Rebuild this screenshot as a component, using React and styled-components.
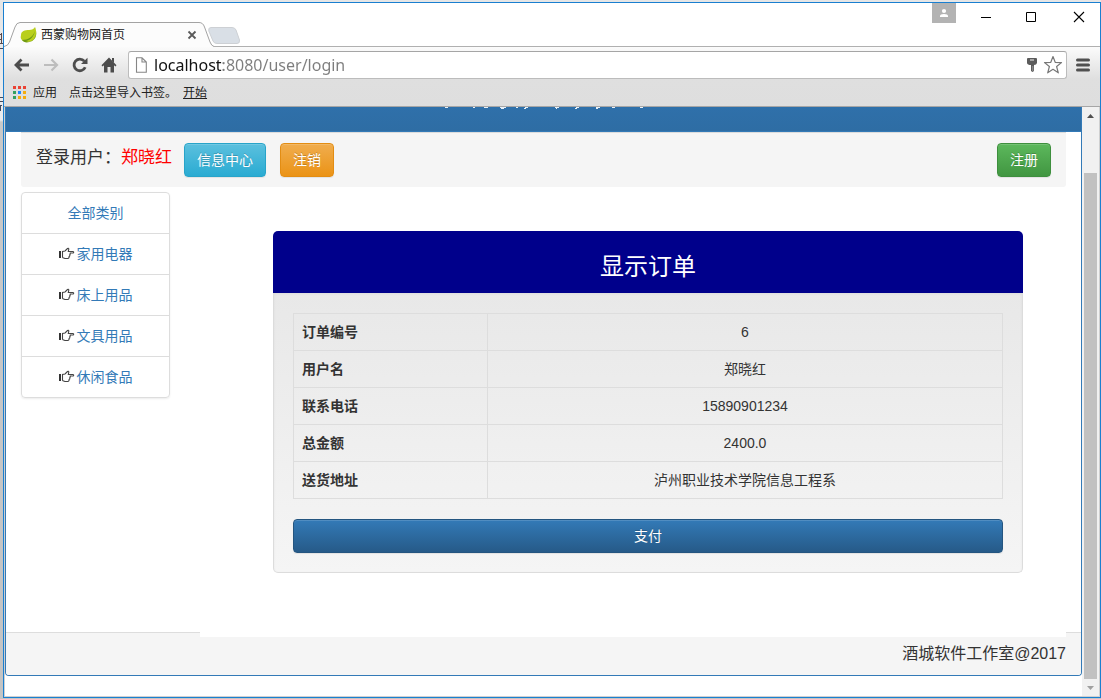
import React from "react";
import styled, { createGlobalStyle, css } from "styled-components";

const Global = createGlobalStyle`
  *, *::before, *::after { box-sizing: border-box; }
  body {
    margin: 0;
    font-family: "Liberation Sans", "Noto Sans CJK SC", sans-serif;
    font-size: 14px;
    line-height: 20px;
    color: #333;
    background: #e9eaeb;
  }
  button, input { font: inherit; }
  button { cursor: pointer; }
`;

const Desktop = styled.div`
  position: relative;
  display: flex;
  min-height: 100vh;
  padding: 2px 0 1px 3px;
  background: linear-gradient(#e6e6e6 0, #ebecee 120px, #c9c9c9 122px, #c4c4c4 100%);
`;

const Behind = styled.svg`
  position: absolute;
  left: 0;
  top: 0;
`;

const Window = styled.div`
  flex: 1;
  min-width: 0;
  display: flex;
  flex-direction: column;
  border: 1px solid #1a7fd0;
  background: #fff;
`;

const TitleBar = styled.header`
  display: flex;
  justify-content: space-between;
  height: 43px;
`;

const Tabs = styled.div`
  display: flex;
  align-items: flex-end;
`;

const Tab = styled.div`
  position: relative;
  z-index: 1;
  display: flex;
  align-items: center;
  gap: 4px;
  width: 210px;
  height: 24px;
  padding: 1px 16px 0;
  font-size: 12px;
  line-height: 16px;
  color: #222;
`;

const TabShape = styled.svg`
  position: absolute;
  left: 0;
  top: 0;
  z-index: -1;
`;

const TabTitle = styled.span`
  flex: 1;
  white-space: nowrap;
`;

const IconButton = styled.button`
  display: flex;
  align-items: center;
  justify-content: center;
  flex: none;
  width: ${(p) => p.$w || 16}px;
  height: ${(p) => p.$h || 16}px;
  padding: 0;
  border: 0;
  background: ${(p) => p.$bg || "transparent"};
`;

const NewTab = styled(IconButton)`
  align-self: flex-end;
  margin: 0 0 2px -6px;
`;

const WindowButtons = styled.div`
  display: flex;
  align-items: flex-start;
`;

const CaptionButtons = styled.div`
  display: flex;
  gap: 8px;
  padding-left: 12px;
`;

const Toolbar = styled.div`
  border-top: 1px solid #b0b0b0;
  border-bottom: 1px solid #a6a6a6;
  background: linear-gradient(#fbfbfb, #dfdfdf 32px, #dedede);
`;

const NavRow = styled.div`
  display: flex;
  align-items: center;
  gap: 6px;
  padding: 4px 7px 0 8px;
`;

const NavButtons = styled.div`
  display: flex;
  gap: 5px;
`;

const Omnibox = styled.div`
  flex: 1;
  display: flex;
  align-items: center;
  height: 28px;
  margin-left: -1px;
  padding: 0 0 0 5px;
  border: 1px solid #bcbcbc;
  border-top-color: #a5a5a5;
  border-radius: 3px;
  background: #fff;
`;

const Url = styled.input`
  flex: 1;
  min-width: 0;
  height: 24px;
  margin-left: 6px;
  padding: 0;
  border: 0;
  outline: 0;
  font-family: "Noto Sans", "Open Sans", sans-serif;
  font-size: 16px;
  line-height: 24px;
  color: #111;
  background: linear-gradient(90deg, #111 69px, #7d7d7d 69px);
  background-clip: text;
  -webkit-background-clip: text;
  -webkit-text-fill-color: transparent;
`;

const Bookmarks = styled.nav`
  display: flex;
  align-items: center;
  gap: 6px;
  height: 27px;
  padding: 0 9px;
  font-size: 12px;
  line-height: 16px;
  color: #222;
`;

const Bookmark = styled.a`
  display: flex;
  align-items: center;
  gap: 7px;
  color: #222;
  text-decoration: ${(p) => (p.$underline ? "underline" : "none")};
`;

const BookmarkHint = styled.span`
  padding-left: 6px;
`;

const Viewport = styled.div`
  flex: 1;
  display: flex;
  border: 1px solid #d0d0d0;
  border-top: 0;
`;

const Page = styled.div`
  flex: 1;
  min-width: 0;
  padding-bottom: 19px;
`;

const SitePanel = styled.div`
  border: 1px solid #337ab7;
  border-top: 0;
  border-radius: 0 0 4px 4px;
  overflow: hidden;
`;

const SiteHeading = styled.div`
  height: 25px;
  background: linear-gradient(#2f70aa, #2e6da4);
  border-bottom: 1px solid #337ab7;
`;

const HeadingEdge = styled.svg`
  display: block;
  margin: 0 auto;
`;

const Content = styled.div`
  padding: 0 15px;
`;

const UserBar = styled.div`
  display: flex;
  align-items: center;
  gap: 14px;
  padding: 10px 15px;
  margin-bottom: 5px;
  border-top: 1px solid #dcdcdc;
  border-radius: 0 0 3px 3px;
  background: #f5f5f5;
`;

const Greeting = styled.div`
  align-self: flex-start;
  margin-right: -2px;
  font-size: 17px;
  line-height: 30px;
  white-space: nowrap;
`;

const UserName = styled.span`
  color: #f00;
`;

const tones = {
  info: css`
    border-color: #28a4c9;
    background: linear-gradient(#5bc0de, #2aabd2);
  `,
  warning: css`
    border-color: #e38d13;
    background: linear-gradient(#f0ad4e, #eb9316);
  `,
  success: css`
    border-color: #3e8f3e;
    background: linear-gradient(#5cb85c, #419641);
  `,
  primary: css`
    border-color: #245580;
    background: linear-gradient(#337ab7, #265a88);
  `,
};

const Button = styled.button`
  display: block;
  height: 34px;
  padding: 0 12px;
  width: ${(p) => (p.$block ? "100%" : "auto")};
  margin-left: ${(p) => (p.$end ? "auto" : "0")};
  border: 1px solid;
  border-radius: 4px;
  color: #fff;
  font-size: 14px;
  line-height: 32px;
  text-shadow: 0 -1px 0 rgba(0, 0, 0, 0.2);
  box-shadow: inset 0 1px 0 rgba(255, 255, 255, 0.15), 0 1px 1px rgba(0, 0, 0, 0.075);
  ${(p) => tones[p.$tone]}
`;

const Columns = styled.div`
  display: flex;
  align-items: flex-start;
  gap: 30px;
`;

const Categories = styled.nav`
  flex: none;
  width: 149px;
  border: 1px solid #ddd;
  border-radius: 4px;
  box-shadow: 0 1px 2px rgba(0, 0, 0, 0.075);
`;

const Category = styled.a`
  display: flex;
  align-items: center;
  justify-content: center;
  gap: 2px;
  height: 41px;
  color: #337ab7;
  text-decoration: none;
  border-bottom: 1px solid #ddd;
  &:last-child {
    height: 40px;
    border-bottom: 0;
  }
`;

const Main = styled.main`
  position: relative;
  flex: 1;
  min-width: 0;
  margin-bottom: -5px;
  padding: 39px 43px 64px 73px;
  background: #fff;
`;

const OrderHeading = styled.h1`
  margin: 0;
  height: 62px;
  padding-top: 4px;
  border-radius: 5px 5px 0 0;
  background: #00008b;
  color: #fff;
  font-size: 24px;
  font-weight: 400;
  line-height: 64px;
  text-align: center;
`;

const OrderBody = styled.div`
  padding: 20px 19px 19px;
  border: 1px solid #dcdcdc;
  border-top: 0;
  border-radius: 0 0 5px 5px;
  background: linear-gradient(#e8e8e8, #f5f5f5);
  box-shadow: inset 0 1px 3px rgba(0, 0, 0, 0.05);
`;

const OrderTable = styled.table`
  width: 100%;
  margin-bottom: 20px;
  border-collapse: collapse;
  table-layout: fixed;
  th, td {
    height: 37px;
    padding: 0 8px;
    border: 1px solid #ddd;
  }
  th {
    width: 194px;
    text-align: left;
    font-weight: 700;
  }
  td { text-align: center; }
`;

const Footer = styled.footer`
  height: 43px;
  padding: 0 15px;
  border-top: 1px solid #ddd;
  background: #f5f5f5;
  font-size: 16px;
  line-height: 41px;
  text-align: right;
`;

const Scrollbar = styled.div`
  flex: none;
  display: flex;
  flex-direction: column;
  align-items: center;
  width: 17px;
  background: #f1f1f1;
`;

const Track = styled.div`
  flex: 1;
  width: 13px;
  padding-top: 49px;
  display: flex;
`;

const Thumb = styled.div`
  flex: 1;
  background: #c1c1c1;
`;

const Leaf = () => (
  <svg width="17" height="16" viewBox="0 0 17 16" aria-hidden="true">
    <path d="M1 8C1 4 5 3 9 3C12 3 14 2 15 0C17 5 17 11 12 14C8 16 3 15 2 13C0 11 1 9 1 8Z" fill="#b9cf1c" />
    <path d="M2 13C8 13 13 10 15 4C14 9 11 13 6 14Q10 16 14 12C16 9 17 5 15 0C17 6 17 11 12 14C8 16 4 16 2 13Z" fill="#6f9a15" />
  </svg>
);

const Hand = () => (
  <svg width="16" height="14" viewBox="0 0 16 14" aria-hidden="true">
    <rect x="0" y="4" width="2" height="7" fill="#333" />
    <path
      d="M3.5 10.5V4.5L6 4L8.500 1.500Q9.500 .8 9.800 2L9.300 4.500H14Q15.300 5 14.200 6H10.800M10.800 6Q11.800 7 10.600 8Q11.300 9 10.100 9.600Q10.400 11 9 11.500H6Q4.500 11 3.500 10.500"
      fill="none"
      stroke="#444"
      strokeWidth="1.1"
    />
  </svg>
);

const Arrow = ({ color, flip }) => (
  <svg width="16" height="14" viewBox="0 0 16 14" aria-hidden="true">
    <path
      d={flip ? "M1 7H14M8.5 1.5L14 7L8.5 12.5" : "M15 7H2M7.5 1.5L2 7L7.5 12.5"}
      fill="none"
      stroke={color}
      strokeWidth={flip ? 2.2 : 2.8}
    />
  </svg>
);

const Reload = () => (
  <svg width="16" height="16" viewBox="0 0 16 16" aria-hidden="true">
    <path d="M13.2 10.2A5.8 5.8 0 1 1 12.3 4.2" fill="none" stroke="#4d4d4d" strokeWidth="2.8" />
    <path d="M15.5 .8V7H9Z" fill="#4d4d4d" />
  </svg>
);

const Home = () => (
  <svg width="16" height="16" viewBox="0 0 16 16" aria-hidden="true">
    <path d="M8 .5L15.5 8.3L14.4 9.4L13 8.2V15.5H9.5V10H6.5V15.5H3V8.2L1.6 9.4L.5 8.3Z" fill="#4d4d4d" />
    <path d="M11 1H13V6L11 4Z" fill="#4d4d4d" />
  </svg>
);

const PageIcon = () => (
  <svg width="14" height="16" viewBox="0 0 14 16" aria-hidden="true">
    <path d="M2.5 .8H8L12.3 5V15.2H2.5ZM8 .8V5H12.3" fill="#fff" stroke="#868686" strokeWidth="1.1" />
  </svg>
);

const Key = () => (
  <svg width="12" height="16" viewBox="0 0 12 16" aria-hidden="true">
    <path d="M2 1H10Q11 1 11 2V6Q10.500 8 8 8V14L6.500 15L5 14V8Q1.500 8 1 6V2Q1 1 2 1Z" fill="#5c5c5c" />
    <path d="M4 3H8" stroke="#d8d8d8" strokeWidth="1.2" />
    <path d="M6.800 9V14" stroke="#aaa" strokeWidth=".8" />
  </svg>
);

const Star = () => (
  <svg width="20" height="20" viewBox="0 0 20 20" aria-hidden="true">
    <path
      d="M10 1.500L12.200 7.300L18.500 7.600L13.600 11.500L15.300 17.800L10 14.300L4.700 17.800L6.400 11.500L1.500 7.600L7.800 7.300Z"
      fill="#fff"
      stroke="#777"
      strokeWidth="1.2"
      strokeLinejoin="round"
    />
  </svg>
);

const Menu = () => (
  <svg width="14" height="14" viewBox="0 0 14 14" aria-hidden="true">
    <path d="M1.500 2H12.500M1.500 7H12.500M1.500 12H12.500" stroke="#505050" strokeWidth="3" strokeLinecap="round" />
  </svg>
);

const appColors = ["#ea4335", "#ea4335", "#ea4335", "#34a060", "#1e88ff", "#f4ac0f", "#34a060", "#f4ac0f", "#f4ac0f"];

const AppsIcon = () => (
  <svg width="13" height="13" viewBox="0 0 13 13" aria-hidden="true">
    {appColors.map((c, i) => (
      <rect key={i} x={(i % 3) * 5} y={Math.floor(i / 3) * 5} width="3" height="3" fill={c} />
    ))}
  </svg>
);

const categories = ["家用电器", "床上用品", "文具用品", "休闲食品"];

const order = [
  ["订单编号", "6"],
  ["用户名", "郑晓红"],
  ["联系电话", "15890901234"],
  ["总金额", "2400.0"],
  ["送货地址", "泸州职业技术学院信息工程系"],
];

export default function App() {
  return (
    <Desktop>
      <Global />
      <Behind width="3" height="122" aria-hidden="true">
        <path d="M0 34.500H2M0 39.500H2M1.500 33V44M0 43.500H3" stroke="#5b4a4a" fill="none" />
        <path d="M0 48.500H3M0 97.500H3M0 101.500H3M0 105.500H2M.5 105V111" stroke="#444b5c" fill="none" />
      </Behind>
      <Window>
        <TitleBar>
          <Tabs>
            <Tab>
              <TabShape width="210" height="25" viewBox="0 0 210 25" aria-hidden="true">
                <path
                  d="M0 24.500Q4 24 5.500 20L11 5Q12.500 .5 16 .5H195Q199 .5 200.500 5L206 20Q207.500 24 210 24.500V25H0Z"
                  fill="#fcfcfc"
                />
                <path
                  d="M0 24.500Q4 24 5.500 20L11 5Q12.500 .5 16 .5H195Q199 .5 200.500 5L206 20Q207.500 24 210 24.500"
                  fill="none"
                  stroke="#a3a3a3"
                />
              </TabShape>
              <Leaf />
              <TabTitle>西蒙购物网首页</TabTitle>
              <IconButton $w={12} aria-label="关闭标签页">
                <svg width="10" height="10" viewBox="0 0 10 10" aria-hidden="true">
                  <path d="M1.500 1.500L8.500 8.500M8.500 1.500L1.500 8.500" stroke="#5a5a5a" strokeWidth="1.8" />
                </svg>
              </IconButton>
            </Tab>
            <NewTab $w={32} $h={17} aria-label="新标签页">
              <svg width="32" height="17" viewBox="0 0 32 17" aria-hidden="true">
                <path
                  d="M3 .5H24Q27 .5 28 3L31.500 13Q32 16.500 29 16.500H9Q6 16.500 5 14L.8 4Q0 .5 3 .5Z"
                  fill="#d9dfe6"
                  stroke="#cdd0d4"
                />
              </svg>
            </NewTab>
          </Tabs>
          <WindowButtons>
            <IconButton $w={24} $h={20} $bg="#b3b3b3" aria-label="用户">
              <svg width="10" height="10" viewBox="0 0 10 10" aria-hidden="true">
                <circle cx="5" cy="3" r="2.100" fill="#fff" />
                <path d="M1 9V8Q1 6 5 6Q9 6 9 8V9Z" fill="#fff" />
              </svg>
            </IconButton>
            <CaptionButtons>
              <IconButton $w={36} $h={28} aria-label="最小化">
                <svg width="10" height="10" aria-hidden="true">
                  <path d="M0 5.500H10" stroke="#000" />
                </svg>
              </IconButton>
              <IconButton $w={38} $h={28} aria-label="最大化">
                <svg width="10" height="10" aria-hidden="true">
                  <path d="M.5 .5H9.500V9.500H.5Z" stroke="#000" fill="none" />
                </svg>
              </IconButton>
              <IconButton $w={42} $h={28} aria-label="关闭">
                <svg width="12" height="12" viewBox="0 0 12 12" aria-hidden="true">
                  <path d="M1 1L11 11M11 1L1 11" stroke="#000" strokeWidth="1.1" />
                </svg>
              </IconButton>
            </CaptionButtons>
          </WindowButtons>
        </TitleBar>

        <Toolbar>
          <NavRow>
            <NavButtons>
              <IconButton $w={20} $h={20} aria-label="后退"><Arrow color="#4d4d4d" /></IconButton>
              <IconButton $w={28} $h={20} aria-label="前进"><Arrow color="#bdbdbd" flip /></IconButton>
              <IconButton $w={20} $h={20} aria-label="重新加载"><Reload /></IconButton>
              <IconButton $w={28} $h={20} aria-label="主页"><Home /></IconButton>
            </NavButtons>
            <Omnibox>
              <PageIcon />
              <Url aria-label="地址栏" defaultValue="localhost:8080/user/login" />
              <IconButton $w={16} $h={20} aria-label="密码"><Key /></IconButton>
              <IconButton $w={26} $h={20} aria-label="收藏"><Star /></IconButton>
            </Omnibox>
            <IconButton $w={20} $h={20} aria-label="菜单"><Menu /></IconButton>
          </NavRow>
          <Bookmarks>
            <Bookmark href="#apps"><AppsIcon />应用</Bookmark>
            <BookmarkHint>点击这里导入书签。</BookmarkHint>
            <Bookmark href="#start" $underline>开始</Bookmark>
          </Bookmarks>
        </Toolbar>

        <Viewport>
          <Page>
            <SitePanel>
              <SiteHeading>
                <HeadingEdge width="204" height="3" viewBox="0 0 204 3" aria-hidden="true">
                  <path
                    d="M3 0H6V1H3ZM31 0H33V1H31ZM42 0H46V1H42ZM58 0H64V1H62V2H59V1H58ZM74 0H76V1H74ZM83 0H86V1H84V2H82V1H83ZM113 0H117V1H115V2H114V1H113ZM134 0H137V1H135V2H133V1H134ZM154 0H158V1H156V2H154ZM170 0H173V1H170ZM198 0H201V1H198Z"
                    fill="#e8f0f7"
                  />
                </HeadingEdge>
              </SiteHeading>
              <Content>
                <UserBar>
                  <Greeting>登录用户：<UserName>郑晓红</UserName></Greeting>
                  <Button type="button" $tone="info">信息中心</Button>
                  <Button type="button" $tone="warning">注销</Button>
                  <Button type="button" $tone="success" $end>注册</Button>
                </UserBar>
                <Columns>
                  <Categories>
                    <Category href="#all">全部类别</Category>
                    {categories.map((name) => (
                      <Category key={name} href={`#${name}`}><Hand />{name}</Category>
                    ))}
                  </Categories>
                  <Main>
                    <OrderHeading>显示订单</OrderHeading>
                    <OrderBody>
                      <OrderTable>
                        <tbody>
                          {order.map(([label, value]) => (
                            <tr key={label}>
                              <th scope="row">{label}</th>
                              <td>{value}</td>
                            </tr>
                          ))}
                        </tbody>
                      </OrderTable>
                      <Button type="button" $tone="primary" $block>支付</Button>
                    </OrderBody>
                  </Main>
                </Columns>
              </Content>
              <Footer>酒城软件工作室@2017</Footer>
            </SitePanel>
          </Page>
          <Scrollbar>
            <IconButton $w={17} $h={17} aria-label="向上滚动">
              <svg width="7" height="4" aria-hidden="true"><path d="M0 4L3.500 0L7 4Z" fill="#505050" /></svg>
            </IconButton>
            <Track><Thumb /></Track>
            <IconButton $w={17} $h={17} aria-label="向下滚动">
              <svg width="7" height="4" aria-hidden="true"><path d="M0 0L3.500 4L7 0Z" fill="#a0a0a0" /></svg>
            </IconButton>
          </Scrollbar>
        </Viewport>
      </Window>
    </Desktop>
  );
}
